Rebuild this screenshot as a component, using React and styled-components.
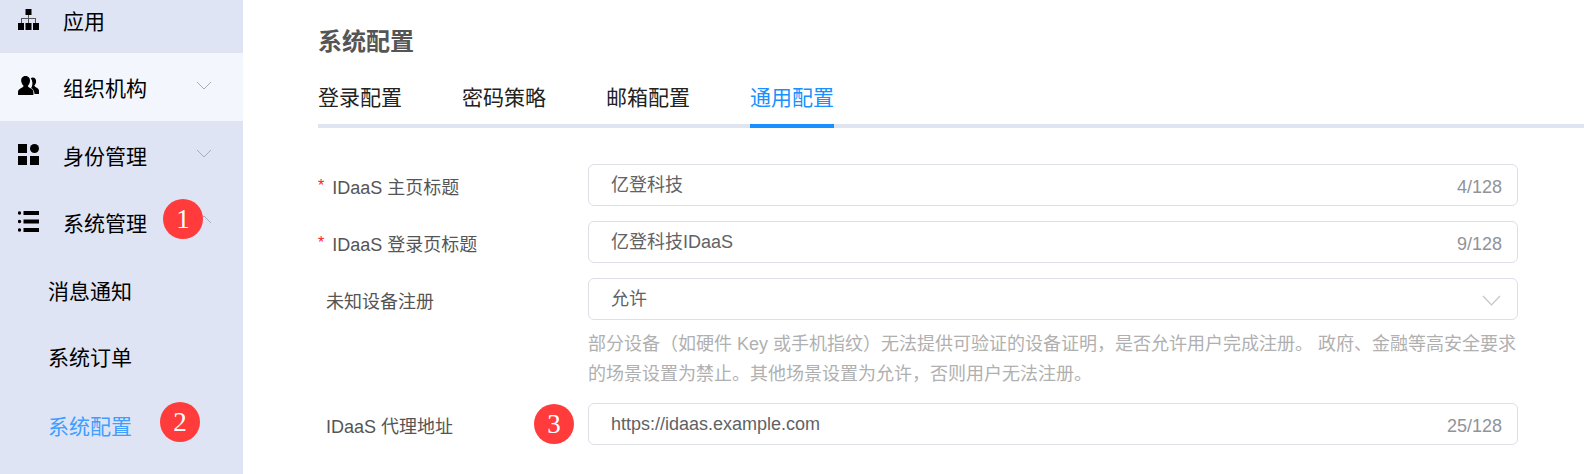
import styled, { createGlobalStyle } from "styled-components";

const GlobalStyle = createGlobalStyle`
  html, body {
    margin: 0;
    padding: 0;
    background: #fff;
    overflow: hidden;
  }
  body {
    font-family: "Liberation Sans", "Noto Sans CJK SC", sans-serif;
  }
`;

const Page = styled.div`
  display: flex;
  width: 1584px;
  height: 474px;
  overflow: hidden;
`;

const Sidebar = styled.nav`
  width: 243px;
  flex-shrink: 0;
  background: #dee4f4;
  display: flex;
  flex-direction: column;
`;

const MenuItem = styled.div`
  position: relative;
  box-sizing: border-box;
  height: ${(p) => p.$height || 67}px;
  flex-shrink: 0;
  display: flex;
  align-items: center;
  padding-left: ${(p) => (p.$child ? 48 : 18)}px;
  padding-bottom: ${(p) => p.$bottom || 0}px;
  font-size: 21px;
  color: ${(p) => (p.$active ? "#409eff" : "#000")};
  background: ${(p) => (p.$hover ? "#f3f7fd" : "transparent")};
`;

const MenuIcon = styled.svg`
  width: 21px;
  height: ${(p) => p.$size || 21}px;
  margin-right: 24px;
  margin-top: -${(p) => p.$lift || 0}px;
  flex-shrink: 0;
`;

const Chevron = styled.svg`
  position: absolute;
  right: 31px;
  top: ${(p) => p.$top}px;
  width: 16px;
  height: 16px;
  fill: none;
  stroke: #a3abbd;
  stroke-width: 1;
`;

const SelectArrow = styled.svg`
  width: 19px;
  height: 12px;
  margin-right: 1px;
  margin-top: 4px;
  fill: none;
  stroke: #c0c4cc;
  stroke-width: 1.2;
`;

const Badge = styled.span`
  position: absolute;
  left: ${(p) => p.$left}px;
  top: ${(p) => p.$top}px;
  width: 40px;
  height: 40px;
  border-radius: 50%;
  background: #ff3b3b;
  color: #fff;
  font-family: "Liberation Serif", serif;
  font-size: 27px;
  display: flex;
  align-items: center;
  justify-content: center;
`;

const Main = styled.main`
  flex: 1;
  min-width: 0;
  padding: 27px 0 0 75px;
`;

const Title = styled.h2`
  margin: 0;
  font-size: 24px;
  line-height: 30px;
  font-weight: 700;
  color: #555;
`;

const Tabs = styled.div`
  display: flex;
  gap: 60px;
  margin-top: 19px;
  border-bottom: 4px solid #dfe4f1;
`;

const Tab = styled.div`
  position: relative;
  height: 48px;
  line-height: 44px;
  font-size: 21px;
  color: ${(p) => (p.$active ? "#1890ff" : "#222")};

  ${(p) =>
    p.$active &&
    `&::after {
      content: "";
      position: absolute;
      left: 0;
      right: 0;
      bottom: -4px;
      height: 4px;
      background: #1890ff;
    }`}
`;

const Form = styled.div`
  position: relative;
  width: 1200px;
  margin-top: 36px;
  display: flex;
  flex-direction: column;
`;

const Row = styled.div`
  display: flex;
  margin-bottom: ${(p) => p.$gap ?? 15}px;
`;

const Label = styled.label`
  width: 270px;
  flex-shrink: 0;
  height: 42px;
  padding-left: ${(p) => (p.$required ? 0 : 8)}px;
  padding-top: 2px;
  box-sizing: border-box;
  display: flex;
  align-items: center;
  font-size: 18px;
  color: #555;
`;

const Star = styled.span`
  color: #f5222d;
  margin-right: 8px;
  font-size: 16px;
`;

const Control = styled.div`
  width: 930px;
`;

const Field = styled.div`
  height: 42px;
  box-sizing: border-box;
  border: 1px solid #dcdfe6;
  border-radius: 6px;
  padding: 0 15px 0 22px;
  display: flex;
  align-items: center;
  justify-content: space-between;
  font-size: 18px;
  color: #606266;
  background: #fff;
`;

const Value = styled.span`
  padding-bottom: ${(p) => (p.$raised ? 4 : 0)}px;
`;

const Counter = styled.span`
  font-size: 18px;
  color: #909399;
  padding-top: 4px;
`;

const Hint = styled.div`
  font-size: 18px;
  line-height: 30px;
  color: #b0b0b0;
  padding-top: 9px;
  white-space: nowrap;
`;

const AppIcon = () => (
  <MenuIcon viewBox="0 0 21 21">
    <rect x="7.500" y="0" width="6" height="6" fill="#000" />
    <rect x="10" y="6" width="1" height="8" fill="#555" />
    <rect x="3" y="9" width="15" height="1" fill="#555" />
    <rect x="3" y="9" width="1" height="5" fill="#555" />
    <rect x="17" y="9" width="1" height="5" fill="#555" />
    <rect x="0" y="14" width="6" height="7" fill="#000" />
    <rect x="7.500" y="14" width="6" height="7" fill="#000" />
    <rect x="15" y="14" width="6" height="7" fill="#000" />
  </MenuIcon>
);

const OrgIcon = () => (
  <MenuIcon viewBox="0 0 21 19" $size={19} $lift={3}>
    <path d="M14.500 1.500c2.500 0 3.900 2 3.600 4.400-.2 1.500-.9 2.800-1.900 3.600.3.900 1.100 1.400 2 1.900 1.400.7 2.800 1.600 2.800 3.300V18h-4.500c0-2.900-1.200-4.600-3.400-6 1.100-1.700 1.500-3.900 1.200-6.100-.2-1.400-.7-2.600-1.500-3.500.6-.6 1.300-.9 1.700-.9z" fill="#000" />
    <path d="M7.500 0c3.100 0 4.800 2.400 4.500 5.300-.2 1.900-1 3.500-2.200 4.500.3 1.200 1.400 1.800 2.800 2.500 1.600.8 2.800 1.800 2.800 3.700V19H0v-3c0-1.900 1.200-2.900 2.800-3.700 1.400-.7 2.500-1.300 2.800-2.500C4.400 8.800 3.500 7.200 3.200 5.300 2.900 2.400 4.400 0 7.500 0z" fill="#000" />
  </MenuIcon>
);

const IdentityIcon = () => (
  <MenuIcon viewBox="0 0 21 21" $lift={1}>
    <rect x="0" y="0" width="9" height="9" fill="#000" />
    <circle cx="16.500" cy="4.500" r="4.500" fill="#000" />
    <rect x="0" y="12" width="9" height="9" fill="#000" />
    <rect x="12" y="12" width="9" height="9" fill="#000" />
  </MenuIcon>
);

const ListIcon = () => (
  <MenuIcon viewBox="0 0 21 21">
    <circle cx="1.500" cy="2" r="1.700" fill="#000" />
    <rect x="5.500" y="0" width="15.500" height="4" fill="#000" />
    <circle cx="1.500" cy="10.500" r="1.700" fill="#000" />
    <rect x="5.500" y="8.500" width="15.500" height="4" fill="#000" />
    <circle cx="1.500" cy="19" r="1.700" fill="#000" />
    <rect x="5.500" y="17" width="15.500" height="4" fill="#000" />
  </MenuIcon>
);

export default function App() {
  return (
    <>
      <GlobalStyle />
      <Page>
        <Sidebar>
          <MenuItem $height={53} $bottom={14}>
            <AppIcon />
            应用
          </MenuItem>
          <MenuItem $height={68} $hover>
            <OrgIcon />
            组织机构
            <Chevron $top={24} viewBox="0 0 16 16">
              <polyline points="1,5 8,12 15,5" />
            </Chevron>
          </MenuItem>
          <MenuItem $height={68}>
            <IdentityIcon />
            身份管理
            <Chevron $top={24} viewBox="0 0 16 16">
              <polyline points="1,5 8,12 15,5" />
            </Chevron>
          </MenuItem>
          <MenuItem $height={69} $bottom={4}>
            <ListIcon />
            系统管理
            <Chevron $top={22} viewBox="0 0 16 16">
              <polyline points="1,12 8,5 15,12" />
            </Chevron>
            <Badge $left={163} $top={10}>1</Badge>
          </MenuItem>
          <MenuItem $child $bottom={4}>消息通知</MenuItem>
          <MenuItem $child $bottom={6}>系统订单</MenuItem>
          <MenuItem $child $active $bottom={2}>
            系统配置
            <Badge $left={160} $top={10}>2</Badge>
          </MenuItem>
        </Sidebar>
        <Main>
          <Title>系统配置</Title>
          <Tabs>
            <Tab>登录配置</Tab>
            <Tab>密码策略</Tab>
            <Tab>邮箱配置</Tab>
            <Tab $active>通用配置</Tab>
          </Tabs>
          <Form>
            <Row>
              <Label $required><Star>*</Star>IDaaS 主页标题</Label>
              <Control>
                <Field><Value $raised>亿登科技</Value><Counter>4/128</Counter></Field>
              </Control>
            </Row>
            <Row>
              <Label $required><Star>*</Star>IDaaS 登录页标题</Label>
              <Control>
                <Field><Value $raised>亿登科技IDaaS</Value><Counter>9/128</Counter></Field>
              </Control>
            </Row>
            <Row $gap={14}>
              <Label>未知设备注册</Label>
              <Control>
                <Field>
                  <Value $raised>允许</Value>
                  <SelectArrow viewBox="0 0 19 12">
                    <polyline points="1,1 9.500,10 18,1" />
                  </SelectArrow>
                </Field>
                <Hint>
                  部分设备（如硬件 Key 或手机指纹）无法提供可验证的设备证明，是否允许用户完成注册。 政府、金融等高安全要求
                  <br />
                  的场景设置为禁止。其他场景设置为允许，否则用户无法注册。
                </Hint>
              </Control>
            </Row>
            <Row $gap={0}>
              <Label>IDaaS 代理地址</Label>
              <Control>
                <Field><Value>https://idaas.example.com</Value><Counter>25/128</Counter></Field>
              </Control>
              <Badge $left={216} $top={240}>3</Badge>
            </Row>
          </Form>
        </Main>
      </Page>
    </>
  );
}
